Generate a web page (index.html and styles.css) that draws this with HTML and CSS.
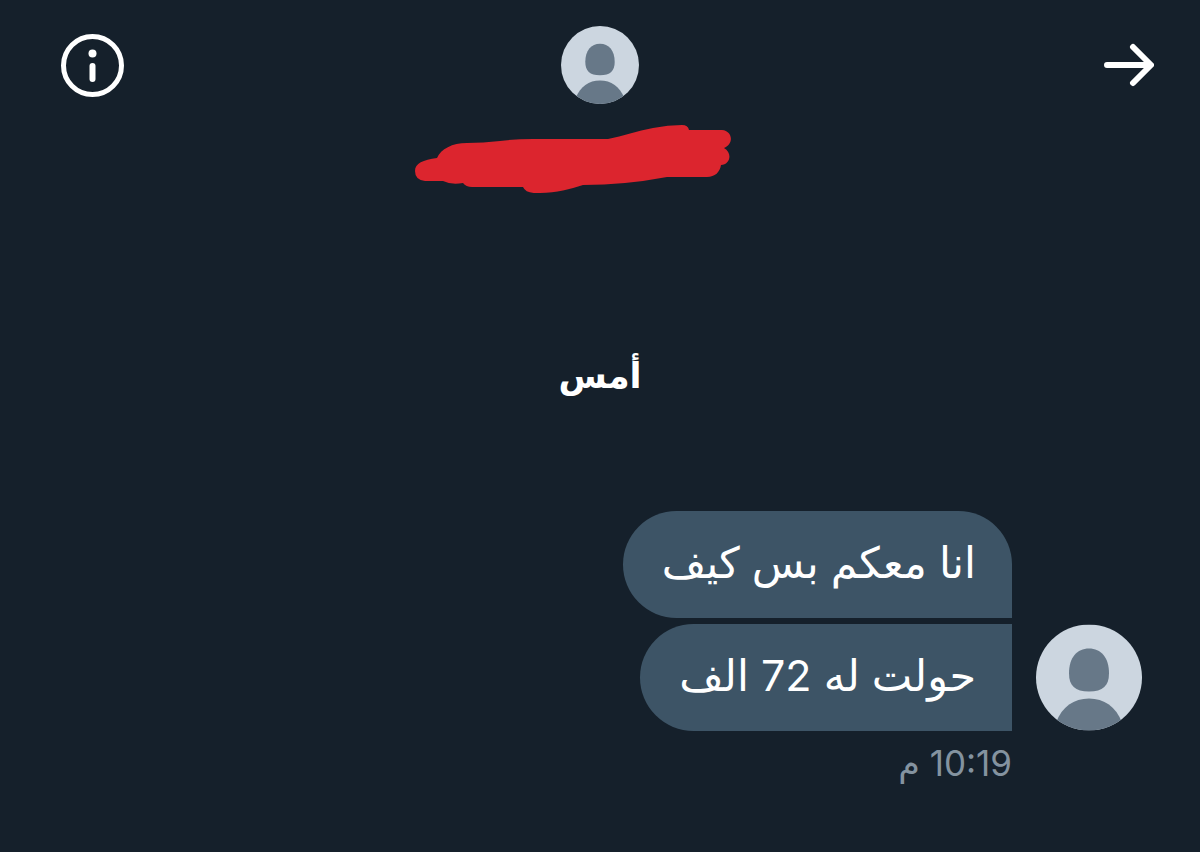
FILE: index.html
```html
<!DOCTYPE html>
<html lang="ar" dir="rtl">
<head>
    <meta charset="UTF-8">
    <meta name="viewport" content="width=device-width, initial-scale=1.0">
    <title>الرسائل</title>
    <link rel="stylesheet" href="styles.css">
</head>
<body>
    <svg class="sprite" aria-hidden="true">
        <symbol id="person" viewBox="0 0 106 106">
            <clipPath id="round"><circle cx="53" cy="53" r="53"/></clipPath>
            <g clip-path="url(#round)">
                <rect width="106" height="106" fill="#ccd6e0"/>
                <path fill="#677888" d="M53 24C65 24 73 33 73 49C73 61 67 67 53 67S33 61 33 49C33 33 41 24 53 24Z"/>
                <path fill="#677888" d="M20 98C26 82 38 74 53 74S80 82 86 98V106H20Z"/>
            </g>
        </symbol>
    </svg>

    <header class="header">
        <button class="icon-button back" aria-label="رجوع">
            <svg width="50" height="44" viewBox="0 0 50 44"><path d="M3 22H46M29 4L47 22L29 40"/></svg>
        </button>
        <svg class="avatar-small"><use href="#person"/></svg>
        <button class="icon-button info" aria-label="معلومات">
            <svg width="64" height="64" viewBox="0 0 64 64">
                <circle cx="32.5" cy="32.5" r="29" stroke-width="5"/>
                <path d="M32.5 33V46" stroke-width="6"/>
                <circle class="dot" cx="32.5" cy="20.5" r="4"/>
            </svg>
        </button>
    </header>

    <svg class="scribble" viewBox="0 0 370 68" aria-hidden="true">
        <path d="M0 46C0 38 8 35 22 33C26 24 37 18 52 18Q68 18 85 16Q100 14 118 14H193C208 11 222 6 238 3Q253 0 267 0Q273 0 274 5H307C318 6 319 19 309 23C318 28 315 40 306 40C305 47 300 52 292 52H252Q210 60 168 60C155 64 142 68 125 68Q111 69 108 62H57Q51 62 48 58Q36 60 28 56H10Q0 55 0 46Z"/>
    </svg>

    <main class="chat">
        <h2 class="day">أمس</h2>
        <div class="group">
            <div class="row">
                <p class="bubble first">انا معكم بس كيف</p>
            </div>
            <div class="row">
                <svg class="avatar"><use href="#person"/></svg>
                <p class="bubble">حولت له 72 الف</p>
            </div>
            <time class="time">10:19 م</time>
        </div>
    </main>
</body>
</html>
```
FILE: styles.css
```css
* {
    box-sizing: border-box;
}
body {
    margin: 0;
    min-height: 100vh;
    background: #15202b;
    color: #fff;
    font-family: Inter, "DejaVu Sans", sans-serif;
}
.sprite {
    position: absolute;
    width: 0;
    height: 0;
}
.header {
    display: grid;
    grid-template-columns: 1fr auto 1fr;
    align-items: center;
    padding-top: 26px;
}
.icon-button {
    display: flex;
    padding: 0;
    border: none;
    background: none;
    cursor: pointer;
}
.back {
    justify-self: start;
    margin-right: 46px;
}
.info {
    justify-self: end;
    margin-left: 60px;
}
.icon-button svg {
    fill: none;
    stroke: #fff;
    stroke-width: 6;
    stroke-linecap: round;
    stroke-linejoin: round;
}
.icon-button .dot {
    fill: #fff;
    stroke: none;
}
.avatar-small {
    width: 78px;
    height: 78px;
}
.scribble {
    display: block;
    width: 370px;
    height: 68px;
    margin: 21px auto 0;
    fill: #dc252e;
}
.day {
    margin: 152px 0 0;
    text-align: center;
    font-size: 35px;
    line-height: 60px;
}
.group {
    display: flex;
    flex-direction: column;
    gap: 6px;
    margin-top: 106px;
    padding-inline: 58px;
}
.row {
    display: flex;
    gap: 24px;
}
.avatar {
    width: 106px;
    height: 107px;
}
.bubble {
    margin: 0;
    padding: 0 36px 4px 39px;
    border-radius: 56px 0 0 56px;
    background: #3d5466;
    font-size: 43px;
    line-height: 103px;
}
.first {
    margin-inline-start: 130px;
    border-top-right-radius: 56px;
}
.time {
    margin-inline-start: 130px;
    color: #8493a0;
    font-size: 35px;
    line-height: 52px;
}
```
